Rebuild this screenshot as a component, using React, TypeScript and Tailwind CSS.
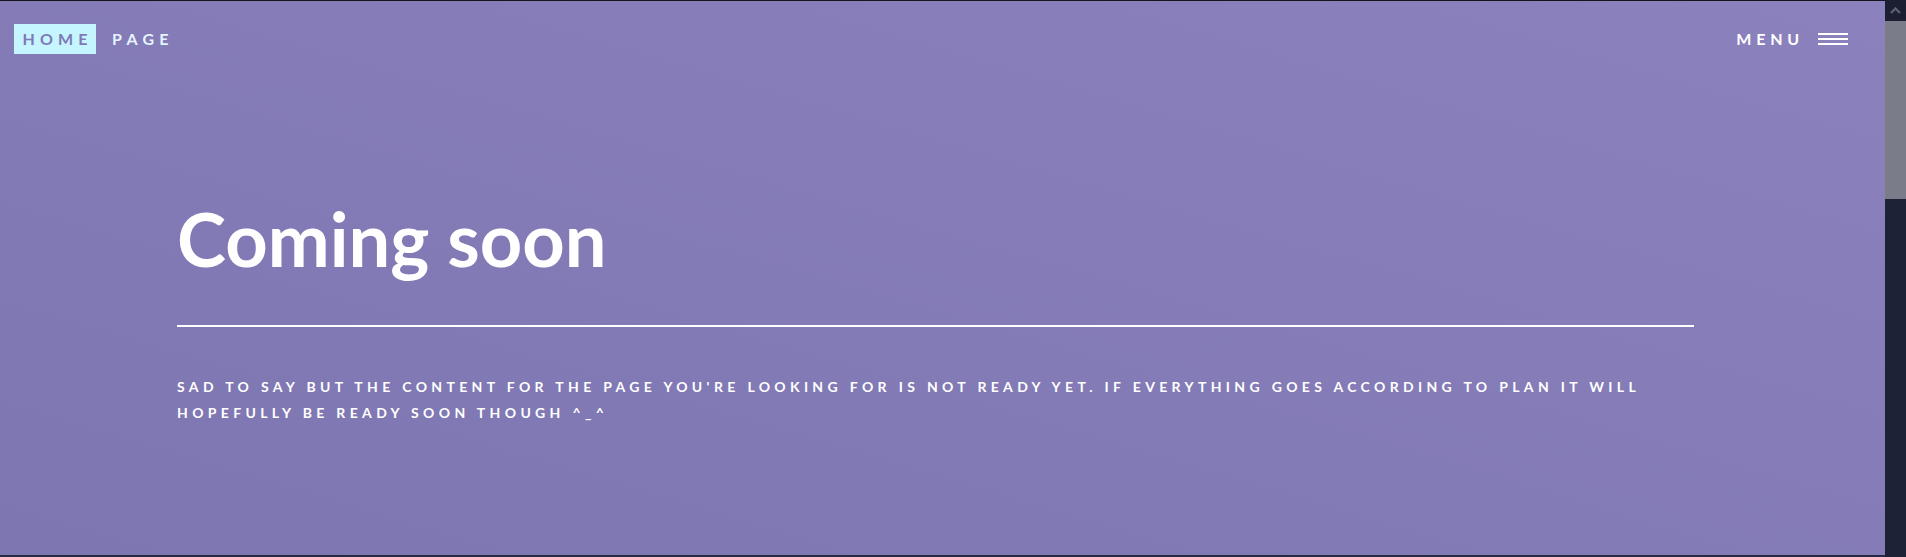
import React from "react";

function Hamburger() {
  return (
    <div className="flex w-[30px] flex-col gap-[3px]">
      <span className="block h-[2px] w-full bg-white" />
      <span className="block h-[2px] w-full bg-white" />
      <span className="block h-[2px] w-full bg-white" />
    </div>
  );
}

function Scrollbar() {
  return (
    <div className="flex h-full w-[21px] flex-col bg-[#1e2236]">
      <div className="flex h-[21px] items-center justify-center bg-[#1c1f31]">
        <svg width="11" height="7" viewBox="0 0 11 7">
          <path d="M1 6 L5.5 1.5 L10 6" stroke="#5a5e74" strokeWidth="2.4" fill="none" />
        </svg>
      </div>
      <div className="h-[178px] bg-[#7b7c8a]" />
      <div className="flex-1 bg-[#1e2236]" />
    </div>
  );
}

export default function App() {
  return (
    <div
      className="flex h-[557px] w-full overflow-hidden bg-[#1e2236]"
      style={{ fontFamily: "Lato, 'Noto Sans', sans-serif" }}
    >
      <div className="flex w-[1885px] flex-col">
        <div className="h-[1px] bg-[#15151f]" />
        <main className="h-[554px] bg-linear-to-tr from-[#7d76b1] to-[#8b81bd]">
          <nav className="flex items-center justify-between pl-[14px] pr-[37px] pt-[23px]">
            <div className="flex items-center">
              <span className="flex h-[30px] w-[82px] items-center justify-center bg-[#c5f5ff] pl-[5px] text-[16px] font-bold tracking-[0.32em] text-[#8079b5]">
                HOME
              </span>
              <span className="ml-[16px] text-[16px] font-bold tracking-[0.33em] text-[#e6f4ff]">
                PAGE
              </span>
            </div>
            <div className="flex items-center gap-[14px]">
              <span className="text-[16px] font-bold tracking-[0.3em] text-white">MENU</span>
              <Hamburger />
            </div>
          </nav>
          <section className="pl-[177px] pr-[191px]">
            <h1 className="mt-[148px] text-[74px] font-bold leading-none text-white">
              Coming soon
            </h1>
            <div className="mt-[49px] h-[2px] bg-white" />
            <p className="mt-[47px] text-[14px] font-bold uppercase leading-[26px] tracking-[0.31em] text-white">
              Sad to say but the content for the page you're looking for is not ready yet. If everything goes according to plan it will hopefully be ready soon though ^_^
            </p>
          </section>
        </main>
        <div className="flex-1 bg-[#262a44]" />
      </div>
      <Scrollbar />
    </div>
  );
}
